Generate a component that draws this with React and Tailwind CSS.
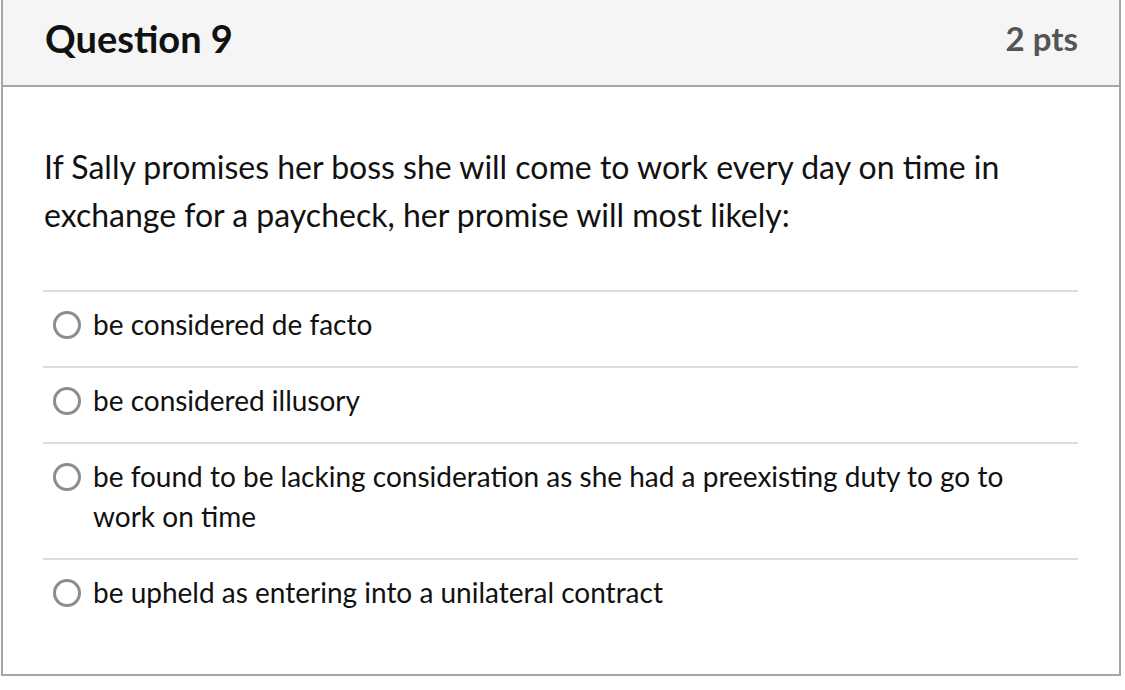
import React from 'react';

const answers = [
  'be considered de facto',
  'be considered illusory',
  'be found to be lacking consideration as she had a preexisting duty to go to work on time',
  'be upheld as entering into a unilateral contract',
];

export default function App() {
  return (
    <div className="w-[1125px] h-[690px] bg-white" style={{ fontFamily: 'Lato, "Open Sans", sans-serif' }}>
      <div className="ml-px w-[1120px] border-2 border-t-0 border-[#a5a5a5]">
        {/* Header */}
        <div className="h-[87px] bg-[#f5f5f5] border-b-2 border-[#a5a5a5] flex items-center justify-between pl-[42px] pr-[41px] pb-[9px]">
          <h2 className="text-[38px] font-bold text-[#111] leading-none">Question 9</h2>
          <span className="text-[33px] font-bold text-[#555] leading-none">2 pts</span>
        </div>

        {/* Body */}
        <div className="pl-[40px] pr-[41px] pt-[56px] pb-[40px]">
          <p className="text-[32px] leading-[48px] text-[#111] mb-[51px] pl-[1px]">
            If Sally promises her boss she will come to work every day on time in exchange for a paycheck, her promise will most likely:
          </p>
          <div>
            {answers.map((a, i) => (
              <div key={i} className="flex items-start border-t-2 border-[#dcdcdc] pt-[12px] pb-[22px] pl-[10px]">
                <span className="mt-[7px] w-[28px] h-[28px] rounded-full border-[3px] border-[#8d8c95] shrink-0 bg-white" />
                <span className="ml-[12px] text-[28px] leading-[40px] text-[#111] pr-[60px]">{a}</span>
              </div>
            ))}
          </div>
        </div>
      </div>
    </div>
  );
}
